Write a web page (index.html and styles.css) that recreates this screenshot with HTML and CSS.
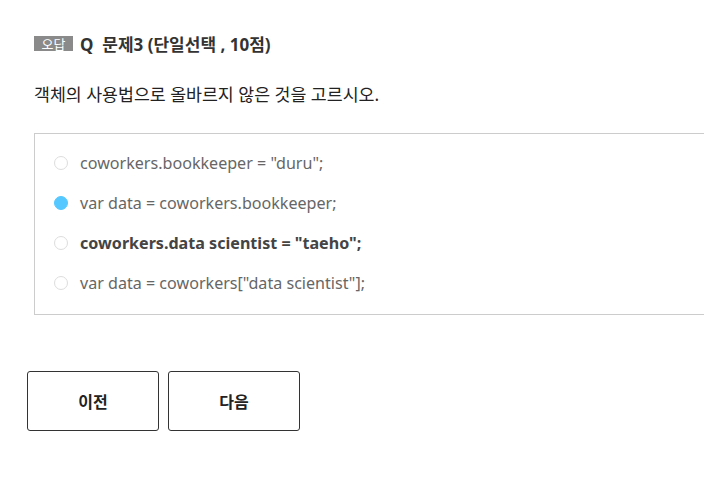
FILE: index.html
```html
<!DOCTYPE html>
<html lang="ko">
<head>
<meta charset="utf-8">
<link rel="stylesheet" href="styles.css">
</head>
<body>
<div class="page">
  <div class="title">
    <span class="badge">오답</span>
    <span class="qtitle">Q&nbsp; 문제3 (단일선택 , 10점)</span>
  </div>
  <p class="question">객체의 사용법으로 올바르지 않은 것을 고르시오.</p>
  <div class="options">
    <div class="option"><span class="radio"></span><span class="label">coworkers.bookkeeper = "duru";</span></div>
    <div class="option"><span class="radio checked"></span><span class="label">var data = coworkers.bookkeeper;</span></div>
    <div class="option answer"><span class="radio"></span><span class="label">coworkers.data scientist = "taeho";</span></div>
    <div class="option"><span class="radio"></span><span class="label">var data = coworkers["data scientist"];</span></div>
  </div>
  <div class="buttons">
    <button class="btn">이전</button>
    <button class="btn">다음</button>
  </div>
</div>
</body>
</html>
```
FILE: styles.css
```css
html, body {
  margin: 0;
  padding: 0;
  background: #fff;
}
body {
  font-family: "Noto Sans", "Noto Sans CJK KR", sans-serif;
  color: #222;
}
.page {
  padding: 34px 0 0 34px;
}
.title {
  display: flex;
  align-items: center;
  height: 19px;
}
.badge {
  display: inline-flex;
  align-items: center;
  justify-content: center;
  width: 39px;
  height: 15px;
  background: #8a8a8a;
  color: #fff;
  font-family: "Noto Sans CJK KR", sans-serif;
  font-size: 13px;
  line-height: 15px;
  margin-right: 7px;
}
.qtitle {
  font-size: 17px;
  font-weight: bold;
  color: #333;
}
.question {
  margin: 31px 0 0 0;
  font-size: 17.3px;
  line-height: 22px;
  color: #222;
}
.options {
  margin-top: 27px;
  border: 1px solid #ccc;
  border-right: none;
  padding: 9px 0 0 19px;
  box-sizing: border-box;
  height: 182px;
}
.option {
  display: flex;
  align-items: center;
  height: 40px;
  font-size: 16.1px;
  color: #666;
}
.option.answer {
  font-weight: bold;
  color: #444;
}
.radio {
  width: 14px;
  height: 14px;
  border: 1px solid #ddd;
  border-radius: 50%;
  box-sizing: border-box;
  margin-right: 12px;
  flex: none;
}
.radio.checked {
  background: #55c8ff;
  border-color: #55c8ff;
}
.buttons {
  display: flex;
  gap: 9px;
  margin: 56px 0 0 -7px;
}
.btn {
  width: 132px;
  height: 60px;
  background: #fff;
  border: 1px solid #333;
  border-radius: 3px;
  font-family: "Noto Sans CJK KR", sans-serif;
  font-size: 16px;
  font-weight: bold;
  color: #222;
  padding: 0;
}
```
